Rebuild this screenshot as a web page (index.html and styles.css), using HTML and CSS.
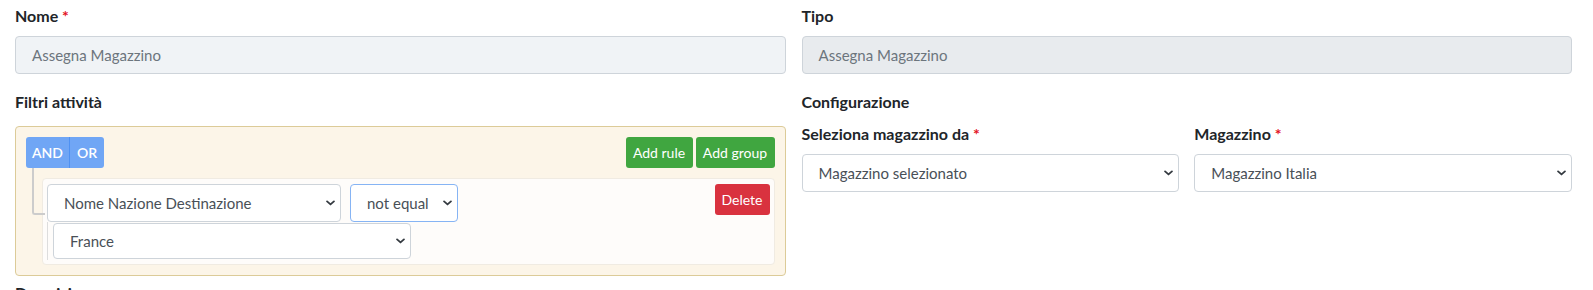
FILE: index.html
```html
<!DOCTYPE html>
<html lang="it">
<head>
<meta charset="utf-8">
<title>Assegna Magazzino</title>
<link rel="stylesheet" href="styles.css">
</head>
<body>
<div class="page">
  <div class="col">
    <div class="field">
      <div class="lbl">Nome <span class="req">*</span></div>
      <div class="input input-ro">Assegna Magazzino</div>
    </div>
    <div class="field">
      <div class="lbl heading">Filtri attività</div>
      <div class="qb">
        <div class="qb-header">
          <div class="btn-group">
            <span class="btn btn-blue">AND</span><span class="btn btn-blue sep">OR</span>
          </div>
          <div class="actions">
            <span class="btn btn-green">Add rule</span>
            <span class="btn btn-green">Add group</span>
          </div>
        </div>
        <div class="rules">
          <div class="rule">
            <div class="rule-main">
              <div class="rule-row">
                <div class="select sel-filter">Nome Nazione Destinazione<svg class="chev" viewBox="0 0 10 6" width="9" height="6"><path d="M1.2 1.2 5 4.6 8.8 1.2" fill="none" stroke="#343a40" stroke-width="2" stroke-linecap="round" stroke-linejoin="round"/></svg></div>
                <div class="select sel-op focus">not equal<svg class="chev" viewBox="0 0 10 6" width="9" height="6"><path d="M1.2 1.2 5 4.6 8.8 1.2" fill="none" stroke="#343a40" stroke-width="2" stroke-linecap="round" stroke-linejoin="round"/></svg></div>
              </div>
              <div class="value-container">
                <div class="select sel-value">France<svg class="chev" viewBox="0 0 10 6" width="9" height="6"><path d="M1.2 1.2 5 4.6 8.8 1.2" fill="none" stroke="#343a40" stroke-width="2" stroke-linecap="round" stroke-linejoin="round"/></svg></div>
              </div>
            </div>
            <span class="btn btn-red">Delete</span>
          </div>
        </div>
      </div>
    </div>
    <div class="field">
      <div class="lbl">Descrizione</div>
    </div>
  </div>
  <div class="col">
    <div class="field">
      <div class="lbl">Tipo</div>
      <div class="input input-dis">Assegna Magazzino</div>
    </div>
    <div class="field">
      <div class="lbl config">Configurazione</div>
      <div class="subrow">
        <div class="subfield">
          <div class="lbl">Seleziona magazzino da <span class="req">*</span></div>
          <div class="select sel-full">Magazzino selezionato<svg class="chev" viewBox="0 0 10 6" width="9" height="6"><path d="M1.2 1.2 5 4.6 8.8 1.2" fill="none" stroke="#343a40" stroke-width="2" stroke-linecap="round" stroke-linejoin="round"/></svg></div>
        </div>
        <div class="subfield">
          <div class="lbl">Magazzino <span class="req">*</span></div>
          <div class="select sel-full">Magazzino Italia<svg class="chev" viewBox="0 0 10 6" width="9" height="6"><path d="M1.2 1.2 5 4.6 8.8 1.2" fill="none" stroke="#343a40" stroke-width="2" stroke-linecap="round" stroke-linejoin="round"/></svg></div>
        </div>
      </div>
    </div>
  </div>
</div>
</body>
</html>
```

FILE: styles.css
```css
* { box-sizing: border-box; }
html, body { margin: 0; background: #fff; }
body {
  font-family: Lato, "Liberation Sans", sans-serif;
  color: #212529;
  overflow: hidden;
}
.page {
  display: grid;
  grid-template-columns: 1fr 1fr;
  column-gap: 16px;
  padding: 5px 21px 0 15px;
}
.field { margin-bottom: 17px; }
.lbl {
  font-size: 16px;
  font-weight: 700;
  line-height: 22px;
  height: 22px;
  margin-bottom: 9px;
  white-space: nowrap;
}
.lbl.heading { margin-bottom: 13px; }
.lbl.config { margin-bottom: 10px; }
.req { color: #e3121e; }
.input {
  height: 38px;
  border: 1px solid #ced4da;
  border-radius: 4px;
  padding: 0 16px;
  font-size: 15px;
  line-height: 36px;
  color: #6c757d;
}
.input-ro { background: #f0f3f6; }
.input-dis { background: #e8ebee; }

.qb {
  background: #fcf5e8;
  border: 1px solid #dccb98;
  border-radius: 4px;
  padding: 10px;
  margin-bottom: -11px;
  height: 150px;
}
.qb-header {
  display: flex;
  justify-content: space-between;
  align-items: flex-start;
}
.btn-group { display: flex; }
.actions { display: flex; gap: 3px; }
.btn {
  display: inline-flex;
  align-items: center;
  justify-content: center;
  height: 31px;
  padding: 0 10px;
  font-size: 14px;
  color: #fff;
  border-radius: 3px;
  white-space: nowrap;
}
.btn-blue {
  background: #70a6f5;
  font-weight: 600;
  width: 43px;
  padding: 0;
  border-radius: 3px 0 0 3px;
}
.btn-blue.sep {
  width: 35px;
  border-left: 1px solid #4f91f2;
  border-radius: 0 3px 3px 0;
}
.btn-green { background: #40a640; }
.btn-green:first-child { width: 67px; padding: 0; }
.btn-green:last-child { width: 79px; padding: 0; }
.btn-red { background: #d9323f; width: 55px; padding: 0; }

.rules { padding: 10px 0 0 16px; }
.rule {
  position: relative;
  display: flex;
  justify-content: space-between;
  align-items: flex-start;
  background: #fefcfa;
  border: 1px solid #f0ebe2;
  border-radius: 4px;
  padding: 5px 4px 5px 4px;
  height: 87px;
}
.rule::before {
  content: "";
  position: absolute;
  left: -11px;
  top: -11px;
  width: 11px;
  height: 45px;
  border-left: 2px solid #cccccc;
  border-bottom: 2px solid #cccccc;
  border-radius: 0 0 0 3px;
}
.rule-main { display: flex; flex-direction: column; }
.rule-row { display: flex; gap: 9px; }
.select {
  position: relative;
  display: flex;
  align-items: center;
  height: 38px;
  border: 1px solid #ced4da;
  border-radius: 4px;
  background: #fff;
  padding: 0 16px;
  font-size: 15px;
  color: #495057;
  white-space: nowrap;
}
.chev {
  position: absolute;
  right: 5px;
  top: 50%;
  margin-top: -3px;
}
.sel-filter { width: 294px; height: 38px; }
.sel-op { width: 108px; border-color: #86b4f4; }
.value-container {
  align-self: flex-start;
  border-left: 1px solid #dddddd;
  padding: 1px 0 1px 5px;
}
.sel-value { width: 358px; height: 36px; }

.subrow {
  display: grid;
  grid-template-columns: 1fr 1fr;
  column-gap: 15px;
}
.sel-full { width: 100%; }
```
